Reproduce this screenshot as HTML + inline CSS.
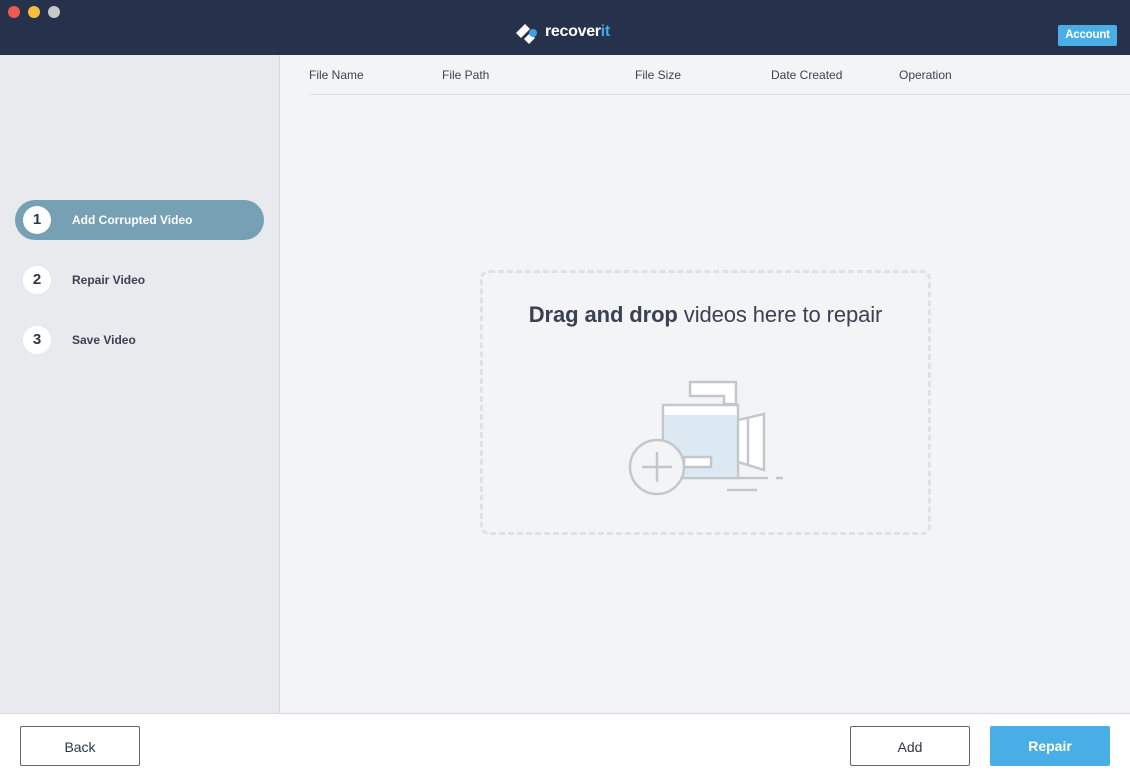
<!DOCTYPE html>
<html><head><meta charset="utf-8"><style>
*{margin:0;padding:0;box-sizing:border-box}
body{width:1130px;height:778px;overflow:hidden;font-family:"Liberation Sans",sans-serif;background:#f3f4f6;position:relative}
.hdr{position:absolute;left:0;top:0;width:1130px;height:55px;background:#26314b}
.dot{position:absolute;top:6px;width:12px;height:12px;border-radius:50%}
.side{position:absolute;left:0;top:55px;width:280px;height:658px;background:#e8eaed;border-right:1px solid #d6d8dc}
.foot{position:absolute;left:0;top:713px;width:1130px;height:65px;background:#fff;border-top:1px solid #d8dadd}
.th{position:absolute;top:68px;font-size:12px;color:#3c4352}
.step{position:absolute;left:15px;width:249px;height:40px;border-radius:20px;font-size:12px;font-weight:bold;color:#3a4152}
.step .n{position:absolute;left:8px;top:6px;width:28px;height:28px;border-radius:50%;background:#fff;text-align:center;line-height:28px;font-size:15px;color:#2f3645}
.step .t{position:absolute;left:57px;top:13px}
.btn{position:absolute;top:726px;width:120px;height:40px;font-size:14px;text-align:center;line-height:40px;border-radius:2px}
</style></head><body>
<div class="hdr">
 <div class="dot" style="left:8px;background:#ee5a52"></div>
 <div class="dot" style="left:28px;background:#f4be3f"></div>
 <div class="dot" style="left:48px;background:#c8c8c8"></div>
 <svg style="position:absolute;left:514px;top:21px" width="28" height="26" viewBox="0 0 28 26">
  <path d="M2 12 L11 3 L16 8 L7 17 Z" fill="#fff"/>
  <path d="M10 18 L16 12 L21 17 L15 23 Z" fill="#fff"/>
  <circle cx="19" cy="12" r="4" fill="#3f9fe0"/>
 </svg>
 <div style="position:absolute;left:545px;top:23px;font-size:16px;font-weight:bold;color:#fff;letter-spacing:-0.3px">recover<span style="color:#3fa9e9">it</span></div>
 <div style="position:absolute;left:1058px;top:25px;width:59px;height:21px;background:#4aaee6;border-radius:2px;color:#fff;font-size:11.5px;font-weight:bold;text-align:center;line-height:21px;letter-spacing:-0.2px">Account</div>
</div>
<div class="side">
 <div class="step" style="top:145px;background:#76a0b4;color:#fff"><div class="n">1</div><div class="t">Add Corrupted Video</div></div>
 <div class="step" style="top:205px"><div class="n">2</div><div class="t">Repair Video</div></div>
 <div class="step" style="top:265px"><div class="n">3</div><div class="t">Save Video</div></div>
</div>
<div class="th" style="left:309px">File Name</div>
<div class="th" style="left:442px">File Path</div>
<div class="th" style="left:635px">File Size</div>
<div class="th" style="left:771px">Date Created</div>
<div class="th" style="left:899px">Operation</div>
<div style="position:absolute;left:309px;top:94px;width:821px;height:1px;background:#dcdee2"></div>
<div style="position:absolute;left:480px;top:270px;width:451px;height:265px;border:3px dashed #dfe1e5;border-radius:9px"></div>
<div style="position:absolute;left:480px;top:302px;width:451px;text-align:center;font-size:22px;color:#3a4152;letter-spacing:-0.1px"><b>Drag and drop</b> videos here to repair</div>
<svg style="position:absolute;left:0;top:0" width="1130" height="778" viewBox="0 0 1130 778" fill="none" stroke="#c3c7cd" stroke-width="2.5">
 <path d="M690 382 H736 V404 H724 V396 H690 Z" fill="#fff"/>
 <rect x="663" y="405" width="75" height="73" fill="#fff"/>
 <rect x="664.5" y="415" width="72" height="62" fill="#dce9f2" stroke="none"/>
 <path d="M738 420 L764 414 V470 L738 462 Z" fill="#fff"/>
 <path d="M748 418 V465"/>
 <path d="M738 478 H768 M776 478 H783 M727 490 H757"/>
 <rect x="684" y="457" width="27" height="10" fill="#fff"/>
 <circle cx="657" cy="467" r="27" fill="#f3f4f6"/>
 <path d="M657 452 V482 M642 467 H672"/>
</svg>
<div class="foot"></div>
<div class="btn" style="left:20px;border:1px solid #666;color:#2f3645;background:#fff">Back</div>
<div class="btn" style="left:850px;border:1px solid #666;color:#2f3645;background:#fff">Add</div>
<div class="btn" style="left:990px;background:#4aaee6;color:#fff;font-weight:bold">Repair</div>
</body></html>
